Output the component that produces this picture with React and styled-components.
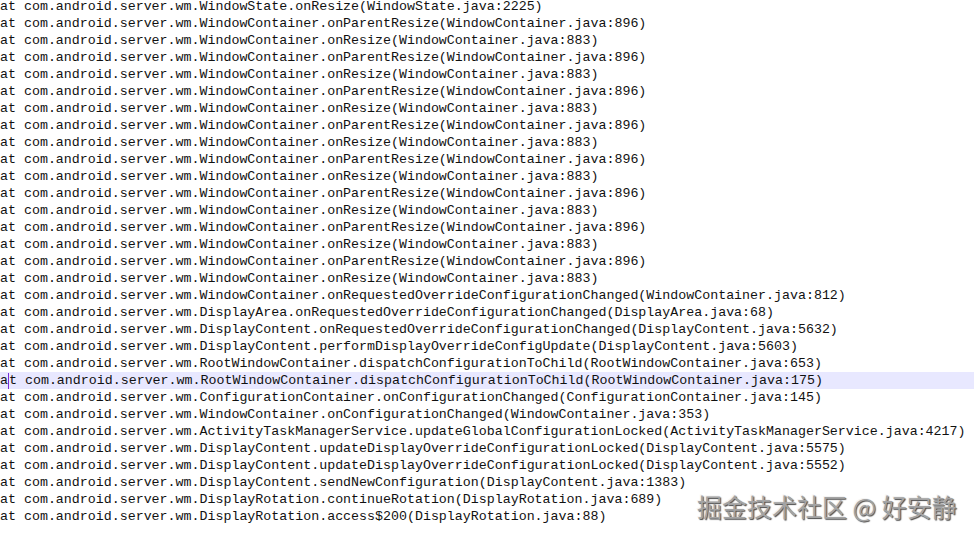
import React from 'react';
import styled, { createGlobalStyle } from 'styled-components';

const PKG = 'com.android.server.wm.';

function buildLines()
{
	let lines = ['WindowState.onResize(WindowState.java:2225)'];
	for (let i = 0; i < 8; i++)
	{
		lines.push('WindowContainer.onParentResize(WindowContainer.java:896)');
		lines.push('WindowContainer.onResize(WindowContainer.java:883)');
	}
	return lines.concat([
		'WindowContainer.onRequestedOverrideConfigurationChanged(WindowContainer.java:812)',
		'DisplayArea.onRequestedOverrideConfigurationChanged(DisplayArea.java:68)',
		'DisplayContent.onRequestedOverrideConfigurationChanged(DisplayContent.java:5632)',
		'DisplayContent.performDisplayOverrideConfigUpdate(DisplayContent.java:5603)',
		'RootWindowContainer.dispatchConfigurationToChild(RootWindowContainer.java:653)',
		'RootWindowContainer.dispatchConfigurationToChild(RootWindowContainer.java:175)',
		'ConfigurationContainer.onConfigurationChanged(ConfigurationContainer.java:145)',
		'WindowContainer.onConfigurationChanged(WindowContainer.java:353)',
		'ActivityTaskManagerService.updateGlobalConfigurationLocked(ActivityTaskManagerService.java:4217)',
		'DisplayContent.updateDisplayOverrideConfigurationLocked(DisplayContent.java:5575)',
		'DisplayContent.updateDisplayOverrideConfigurationLocked(DisplayContent.java:5552)',
		'DisplayContent.sendNewConfiguration(DisplayContent.java:1383)',
		'DisplayRotation.continueRotation(DisplayRotation.java:689)',
		'DisplayRotation.access$200(DisplayRotation.java:88)',
	]);
}

const CARET_LINE = 22;

function App()
{
	const lines = buildLines();

	return (
		<Root>
			<GlobalStyle />
			<Editor>
				{lines.map((text, i) => (
					<Line key={i} $current={i === CARET_LINE}>
						{i === CARET_LINE
							? <>a<Caret />t {PKG + text}</>
							: 'at ' + PKG + text}
					</Line>
				))}
			</Editor>
			<Watermark>掘金技术社区 @ 好安静</Watermark>
		</Root>
	);
}

const GlobalStyle = createGlobalStyle`
	html, body {
		margin: 0;
		padding: 0;
		background: #fff;
	}
`;

const Root = styled.div`
	position: relative;
	width: 974px;
	height: 540px;
	overflow: hidden;
	background: #fff;
`;

const Editor = styled.div`
	display: flex;
	flex-direction: column;
	margin-top: -2px;
	font-family: "Liberation Mono", "Courier New", monospace;
	font-size: 13.3px;
	color: #111;
`;

const Line = styled.div`
	height: 17px;
	line-height: 17px;
	white-space: pre;
	background: ${p => p.$current ? '#e8e8ff' : 'transparent'};
`;

const Caret = styled.span`
	display: inline-block;
	width: 0;
	height: 16px;
	vertical-align: top;
	margin-top: 1px;
	border-left: 1px solid #7a2cd8;
`;

const Watermark = styled.div`
	position: absolute;
	left: 697px;
	top: 490px;
	font-family: "Noto Sans CJK SC", "Noto Sans", sans-serif;
	font-size: 25px;
	line-height: 32px;
	color: #a4a4a4;
	text-shadow: 1px 1px 1px #4a4a4a, -1px -1px 0 #f4f4f4;
	white-space: nowrap;
`;

export default App;
